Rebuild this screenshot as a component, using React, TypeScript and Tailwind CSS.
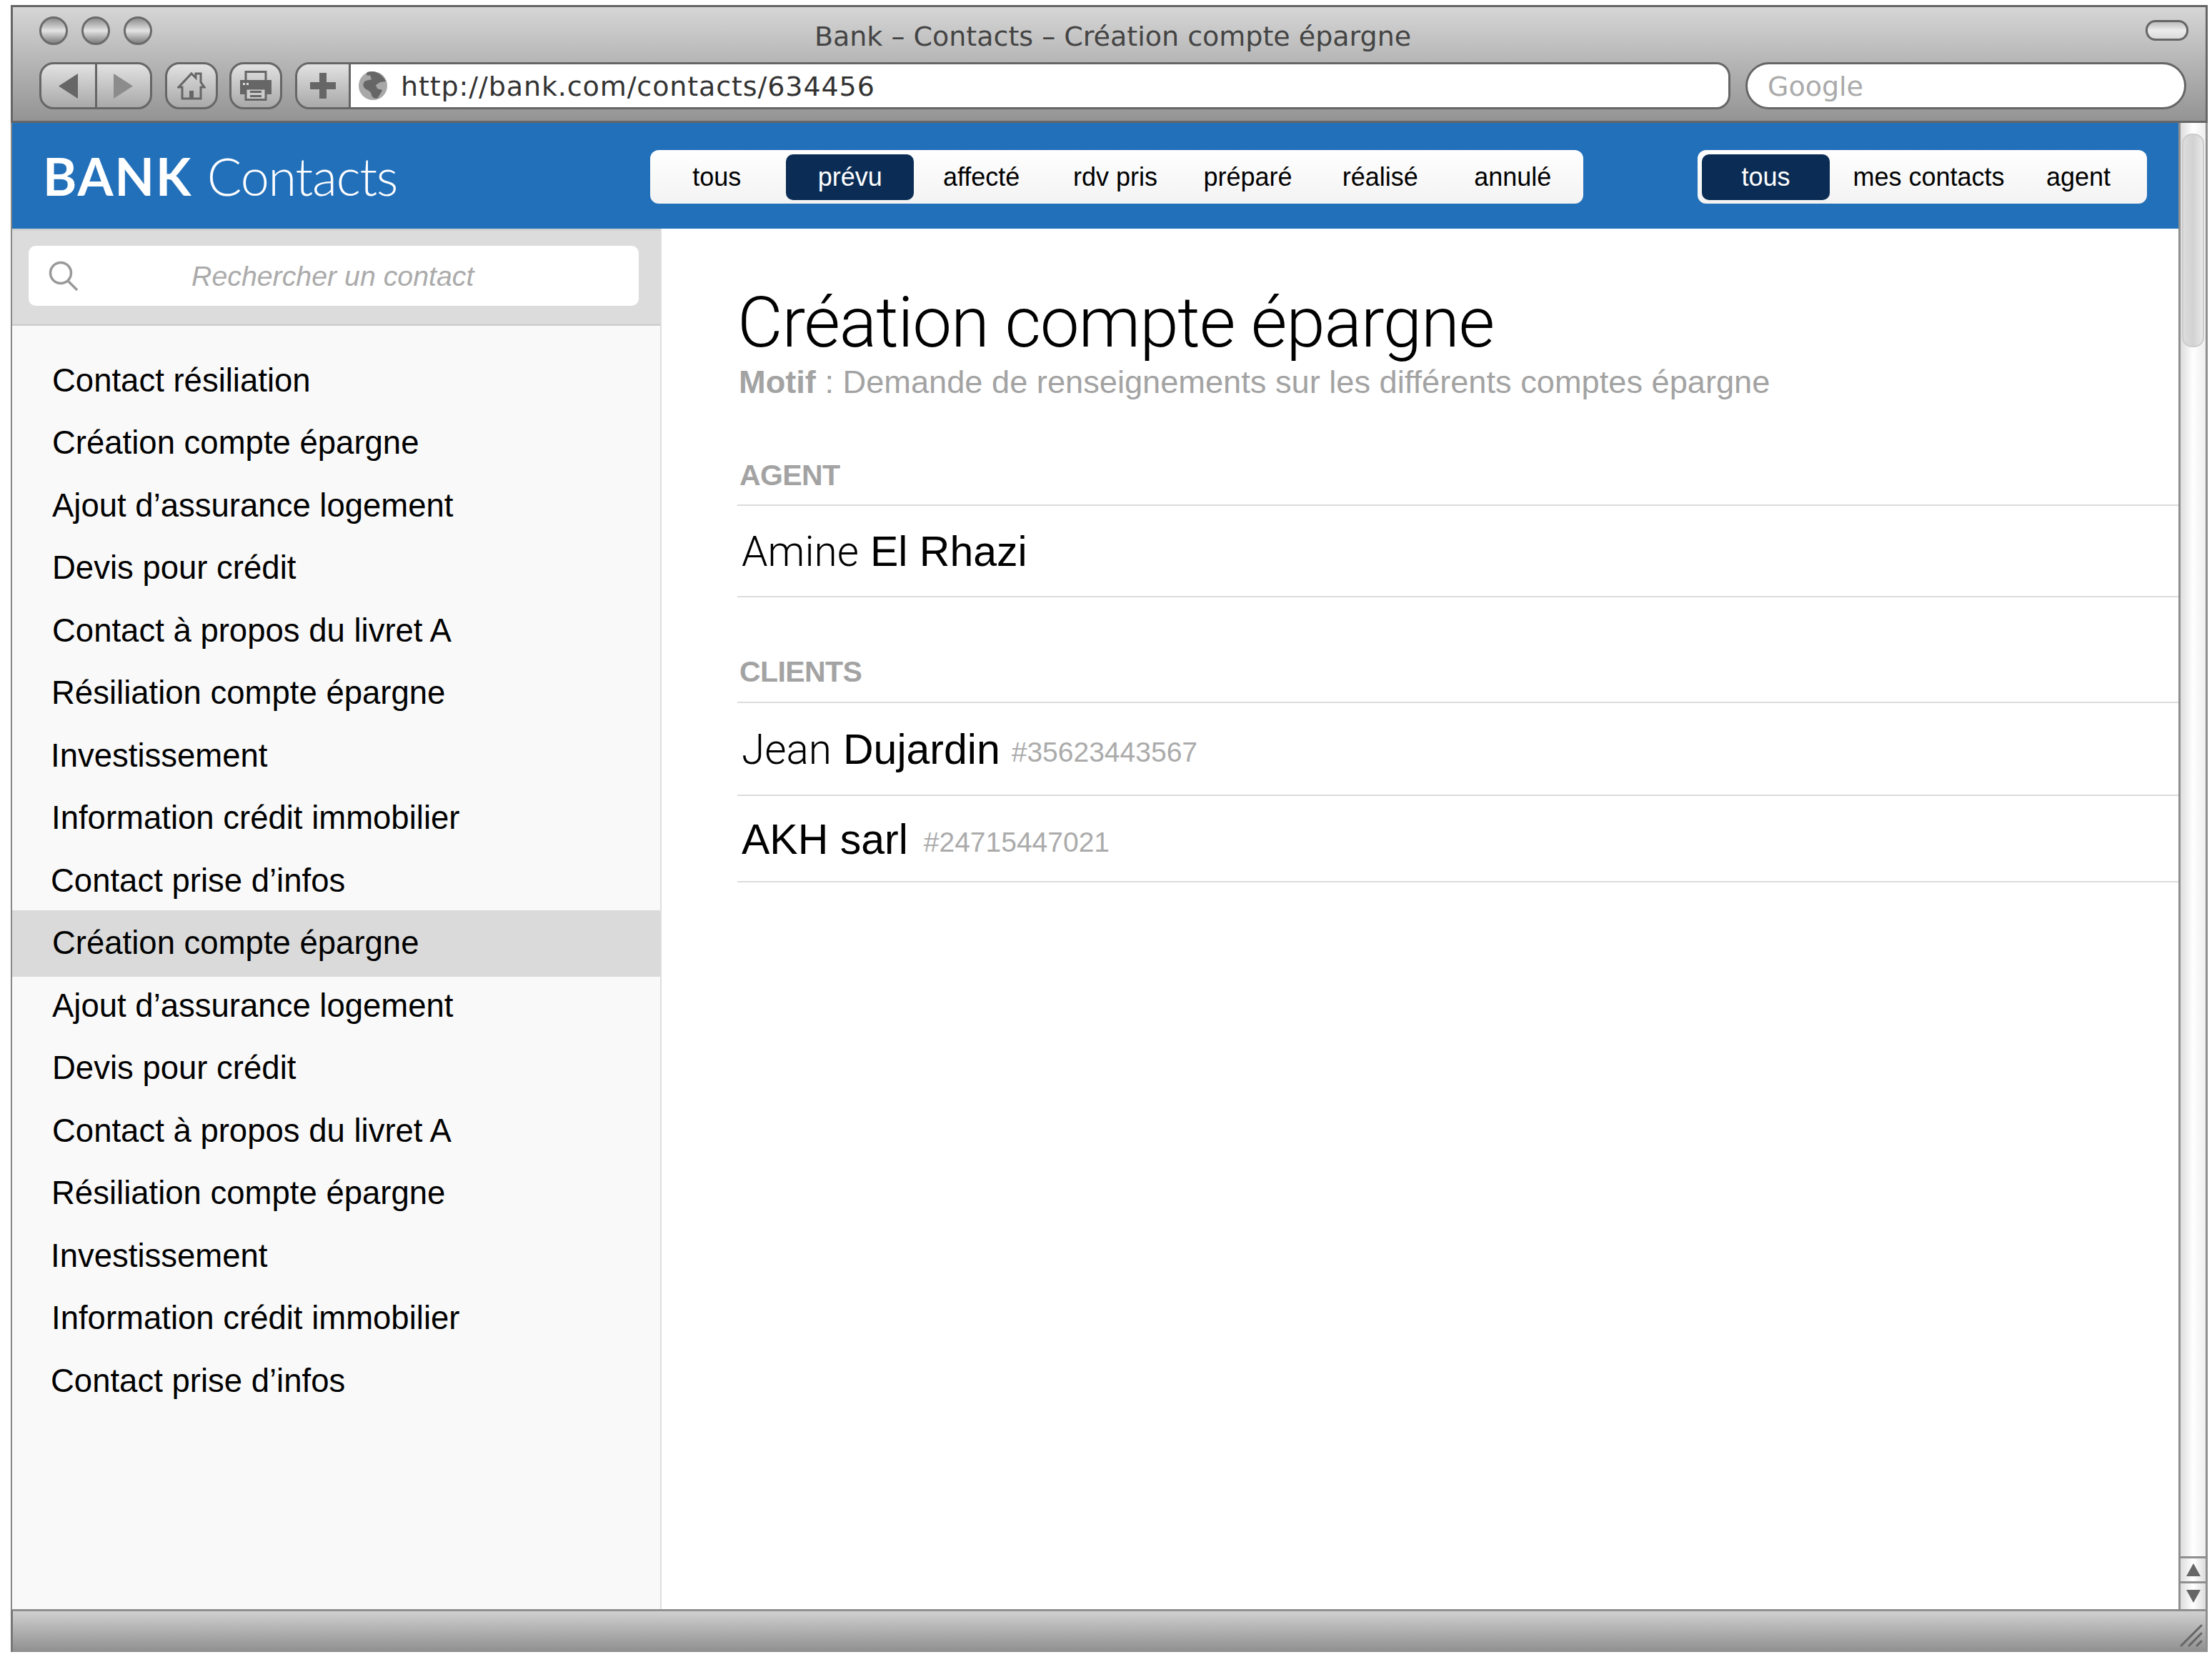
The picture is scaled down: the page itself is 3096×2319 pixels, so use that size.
import React from 'react';

const sans = "font-['Liberation_Sans',Arial,sans-serif]";

const contacts = [
  { name: 'Contact résiliation', pad: 'pl-[56px]' },
  { name: 'Création compte épargne', pad: 'pl-[56px]' },
  { name: 'Ajout d’assurance logement', pad: 'pl-[56px]' },
  { name: 'Devis pour crédit', pad: 'pl-[56px]' },
  { name: 'Contact à propos du livret A', pad: 'pl-[56px]' },
  { name: 'Résiliation compte épargne', pad: 'pl-[55px]' },
  { name: 'Investissement', pad: 'pl-[54px]' },
  { name: 'Information crédit immobilier', pad: 'pl-[55px]' },
  { name: 'Contact prise d’infos', pad: 'pl-[54px]' },
  { name: 'Création compte épargne', pad: 'pl-[56px]', active: true },
  { name: 'Ajout d’assurance logement', pad: 'pl-[56px]' },
  { name: 'Devis pour crédit', pad: 'pl-[56px]' },
  { name: 'Contact à propos du livret A', pad: 'pl-[56px]' },
  { name: 'Résiliation compte épargne', pad: 'pl-[55px]' },
  { name: 'Investissement', pad: 'pl-[54px]' },
  { name: 'Information crédit immobilier', pad: 'pl-[55px]' },
  { name: 'Contact prise d’infos', pad: 'pl-[54px]' },
];

const TrafficLight = () => (
  <div className="w-10 h-10 rounded-full border-[3px] border-[#6b6b6b] bg-gradient-to-b from-[#8f8f8f] via-[#e4e4e4] to-[#808080]" />
);

const toolButton = 'h-[66px] flex items-center justify-center border-[3px] border-[#666] bg-gradient-to-b from-[#e2e2e2] to-[#a9a9a9]';

const Toolbar = () => (
  <div className="h-[165px] shrink-0 flex flex-col border-x-[3px] border-y-[3px] border-[#666] bg-gradient-to-b from-[#d6d6d6] to-[#949494]">
    <div className="h-[77px] relative flex items-start pl-[37px] pt-[13px] gap-[19px]">
      <TrafficLight />
      <TrafficLight />
      <TrafficLight />
      <div className="absolute left-0 right-0 pl-[10px] top-[18px] text-center font-['DejaVu_Sans',sans-serif] text-[38px] leading-[46px] text-[#444]">
        Bank – Contacts – Création compte épargne
      </div>
      <div className="absolute right-[24px] top-[18px] w-[60px] h-[29px] rounded-[14px] border-[3px] border-[#666] bg-gradient-to-b from-[#bdbdbd] via-[#ececec] to-[#dadada]" />
    </div>
    <div className="flex items-start pl-[37px]">
      <div className={`${toolButton} w-[158px] rounded-[20px]`}>
        <div className="flex-1 h-full flex items-center justify-center border-r-[3px] border-[#666]">
          <svg width="27" height="35" viewBox="0 0 27 35"><path d="M27 0V35L0 17.5Z" fill="#666" /></svg>
        </div>
        <div className="flex-1 h-full flex items-center justify-center">
          <svg width="27" height="35" viewBox="0 0 27 35"><path d="M0 0V35L27 17.5Z" fill="#8c8c8c" /></svg>
        </div>
      </div>
      <div className={`${toolButton} w-[74px] rounded-[20px] ml-[18px]`}>
        <svg width="40" height="40" viewBox="0 0 40 40" fill="none">
          <path d="M2 22L20 3L26 9V3H33V15L38 22H33V38H7V22Z" stroke="#666" strokeWidth="3" strokeLinejoin="miter" />
          <rect x="17" y="27" width="6" height="11" fill="#666" />
        </svg>
      </div>
      <div className={`${toolButton} w-[74px] rounded-[20px] ml-[16px]`}>
        <svg width="44" height="42" viewBox="0 0 44 42">
          <path d="M8 14V1.5H36V14" fill="none" stroke="#666" strokeWidth="3" />
          <path d="M0 13H44V33H37V24H7V33H0Z" fill="#666" />
          <rect x="4" y="17" width="3" height="3" fill="#ddd" />
          <rect x="9" y="17" width="3" height="3" fill="#ddd" />
          <path d="M8 25H36V40.5H8Z" fill="#ccc" stroke="#666" strokeWidth="3" />
          <path d="M14 29.5H30M14 35.5H30" stroke="#666" strokeWidth="3" />
        </svg>
      </div>
      <div className="ml-[18px] flex flex-1 h-[66px] rounded-[20px] border-[3px] border-[#666] overflow-hidden">
        <div className="w-[75px] shrink-0 flex items-center justify-center border-r-[3px] border-[#666] bg-gradient-to-b from-[#e2e2e2] to-[#a9a9a9]">
          <svg width="36" height="36" viewBox="0 0 36 36"><path d="M13 0H23V13H36V23H23V36H13V23H0V13H13Z" fill="#666" /></svg>
        </div>
        <div className="flex-1 bg-white flex items-center pl-[11px]">
          <svg width="40" height="40" viewBox="0 0 40 40" className="shrink-0">
            <circle cx="20" cy="20" r="20" fill="#a8a8a8" />
            <path d="M12 1C9 5 13 7 16 5L18 11L10 13C6 15 5 20 9 24C13 27 17 27 18 33C19 37 24 39 27 37C29 32 32 30 33 26L26 24L24 19L30 15L38 14C35 7 28 1 20 0C17 0 14 0 12 1Z" fill="#666" />
          </svg>
          <span className="ml-[19px] pt-[2px] font-['DejaVu_Sans',sans-serif] text-[38px] leading-none text-[#333] tracking-[0.9px]">http://bank.com/contacts/634456</span>
        </div>
      </div>
      <div className="ml-[21px] mr-[27px] w-[617px] shrink-0 h-[66px] rounded-[33px] border-[3px] border-[#666] bg-white flex items-center pl-[28px] pt-[2px] font-['DejaVu_Sans',sans-serif] text-[38px] text-[#aaa]">
        Google
      </div>
    </div>
  </div>
);

const navItem = (label: string, active: boolean, width: string) => (
  <div
    key={label}
    className={`${width} h-[64px] pt-[1px] flex items-center justify-center rounded-[10px] text-[36px] ${active ? 'bg-[#0b2d55] text-white' : 'text-black'}`}
  >
    {label}
  </div>
);

const Header = () => (
  <div className={`h-[148px] shrink-0 bg-[#2370ba] flex items-center pt-[3px] ${sans}`}>
    <div className="w-[893px] pl-[43px] -mt-[3px] font-['Lato',sans-serif] text-[72px] leading-none text-white whitespace-nowrap">
      <span className="font-bold tracking-[2px]">BANK</span> <span className="font-light ml-[2px] tracking-[-1.2px]">Contacts</span>
    </div>
    <div className="w-[1306px] h-[75px] rounded-[12px] bg-gradient-to-b from-white to-[#f3f3f3] flex items-center px-[6px]">
      {navItem('tous', false, 'w-[185px] pr-[10px]')}
      {navItem('prévu', true, 'w-[179px]')}
      {navItem('affecté', false, 'w-[190px]')}
      {navItem('rdv pris', false, 'w-[186px]')}
      {navItem('préparé', false, 'w-[186px]')}
      {navItem('réalisé', false, 'w-[186px]')}
      {navItem('annulé', false, 'w-[186px]')}
    </div>
    <div className="ml-[160px] w-[629px] h-[75px] rounded-[12px] bg-gradient-to-b from-white to-[#f3f3f3] flex items-center px-[6px]">
      {navItem('tous', true, 'w-[179px]')}
      {navItem('mes contacts', false, 'w-[277px]')}
      {navItem('agent', false, 'w-[142px]')}
    </div>
  </div>
);

const Sidebar = () => (
  <div className={`w-[909px] shrink-0 flex flex-col bg-[#f9f9f9] border-r-2 border-[#dedede] ${sans}`}>
    <div className="h-[136px] shrink-0 bg-[#dcdcdc] border-y-[3px] border-[#d0d0d0] pl-[23px] pr-[30px] py-[21px]">
      <div className="h-[84px] rounded-[10px] bg-white flex items-center pl-[28px]">
        <svg width="42" height="42" viewBox="0 0 42 42" fill="none" stroke="#999" strokeWidth="3.5" className="shrink-0">
          <circle cx="17" cy="17" r="14.5" />
          <path d="M27 28L40 41" />
        </svg>
        <span className="ml-[158px] text-[39.3px] italic text-[#ababab]">Rechercher un contact</span>
      </div>
    </div>
    <div className="pt-[33px]">
      {contacts.map((c, i) => (
        <div
          key={i}
          className={`${c.pad} flex items-center text-[45.5px] text-black ${c.active ? 'h-[93px] -my-[2.75px] bg-[#dadada]' : 'h-[87.5px]'}`}
        >
          {c.name}
        </div>
      ))}
    </div>
  </div>
);

const PersonRow = ({ first, last, id, h, gap = 'ml-[16px]' }: { first?: string; last: string; id?: string; h: string; gap?: string }) => (
  <div className={`${h} flex items-center pl-[6px] pt-[3px] border-b-2 border-[#dcdcdc] text-[59px] text-black`}>
    {first && <span className="font-['Roboto',sans-serif] font-light text-[58.5px] mr-[16px]">{first}</span>}
    <span>{last}</span>
    {id && <span className={`${gap} mt-[8px] text-[39px] text-[#ababab]`}>{id}</span>}
  </div>
);

const sectionTitle = 'pl-[3px] text-[41px] leading-[48px] tracking-[-0.6px] font-bold text-[#a3a3a3] border-b-2 border-[#dcdcdc]';

const Detail = () => (
  <div className={`flex-1 bg-white pl-[106px] pt-[76px] ${sans}`}>
    <h1 className="font-['Roboto',sans-serif] font-light text-[98px] leading-[112px] tracking-[-1.2px] text-black">Création compte épargne</h1>
    <div className="mt-[1px] pl-[2px] text-[45.2px] leading-[52px] text-[#a3a3a3]">
      <span className="font-bold">Motif</span> : Demande de renseignements sur les différents comptes épargne
    </div>
    <div className={`mt-[80px] pb-[17px] ${sectionTitle}`}>AGENT</div>
    <PersonRow first="Amine" last="El Rhazi" h="h-[128px]" />
    <div className={`mt-[80px] pb-[18px] ${sectionTitle}`}>CLIENTS</div>
    <PersonRow first="Jean" last="Dujardin" id="#35623443567" h="h-[130px]" />
    <PersonRow last="AKH sarl" id="#24715447021" h="h-[121px]" gap="ml-[22px]" />
  </div>
);

const Scrollbar = () => (
  <div className="w-[41px] shrink-0 flex flex-col border-x-[3px] border-[#8f8f8f] bg-gradient-to-r from-[#ddd] via-white to-[#eee]">
    <div className="mt-[15px] mx-[2px] h-[299px] rounded-[14px] border-2 border-[#ccc] bg-gradient-to-r from-[#ddd] via-[#d2d2d2] to-[#e8e8e8]" />
    <div className="flex-1" />
    <div className="h-[35px] border-t-[3px] border-[#8f8f8f] flex items-center justify-center bg-gradient-to-r from-[#ddd] via-white to-[#ddd]">
      <svg width="20" height="18" viewBox="0 0 20 18"><path d="M10 0L20 18H0Z" fill="#666" /></svg>
    </div>
    <div className="h-[39px] border-t-[3px] border-[#8f8f8f] flex items-center justify-center bg-gradient-to-r from-[#ddd] via-white to-[#ddd]">
      <svg width="20" height="18" viewBox="0 0 20 18"><path d="M10 18L20 0H0Z" fill="#666" /></svg>
    </div>
  </div>
);

const StatusBar = () => (
  <div className="h-[60px] shrink-0 flex items-end justify-end border-t-[3px] border-x-[3px] border-x-[#8f8f8f] border-t-[#8f8f8f] border-l-[#777] bg-gradient-to-b from-[#d0d0d0] to-[#8f8f8f] pr-[4px] pb-[7px]">
    <svg width="32" height="32" viewBox="0 0 32 32" stroke="#666" strokeWidth="3" strokeLinecap="round">
      <path d="M2 30L30 2M13 30L30 13M24 30L30 24" />
    </svg>
  </div>
);

export default function App() {
  return (
    <div className="w-[3096px] h-[2319px] bg-white pl-[15px] pr-[6px] pt-[7px] pb-[7px]">
      <div className="w-full h-full flex flex-col">
        <Toolbar />
        <div className="flex-1 flex min-h-0 border-l-2 border-[#888]">
          <div className="flex-1 flex flex-col min-w-0">
            <Header />
            <div className="flex-1 flex min-h-0">
              <Sidebar />
              <Detail />
            </div>
          </div>
          <Scrollbar />
        </div>
        <StatusBar />
      </div>
    </div>
  );
}
